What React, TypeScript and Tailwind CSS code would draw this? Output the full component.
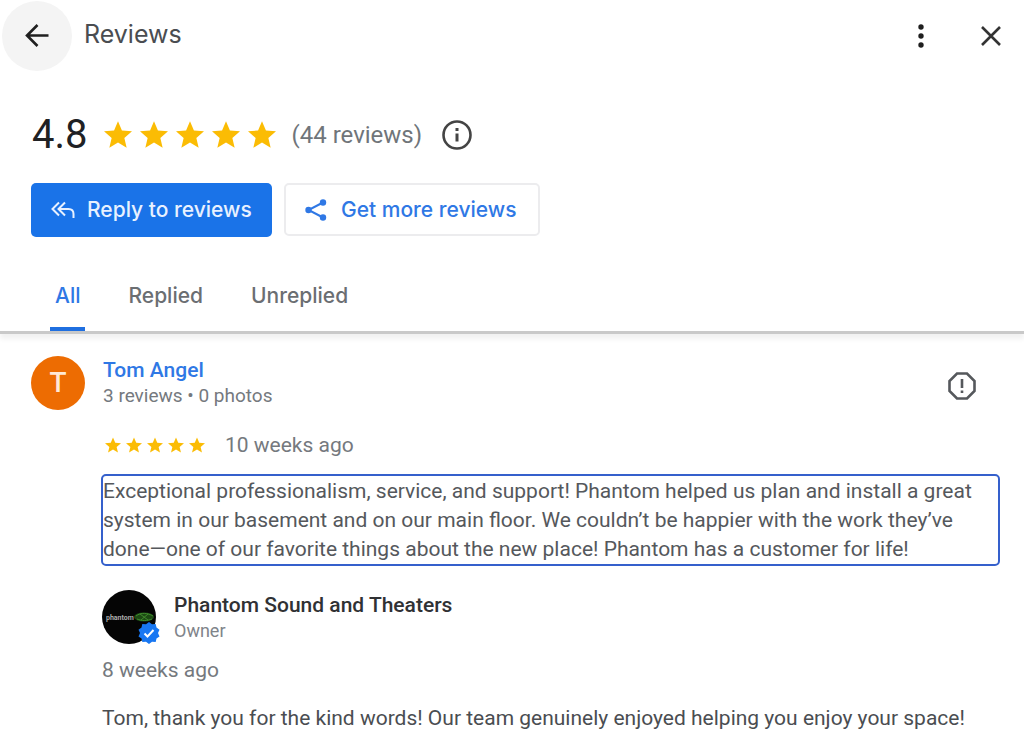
import * as React from "react";

const STAR_PATH =
  "M12 17.27 18.18 21l-1.64-7.03L22 9.24l-7.19-.61L12 2 9.19 8.63 2 9.24l5.46 4.73L5.82 21z";

const tabs = ["All", "Replied", "Unreplied"];

function Stars({ big }: { big?: boolean }) {
  return (
    <div
      role="img"
      aria-label="5 stars"
      className={big ? "flex gap-2" : "flex gap-[5px]"}
    >
      {[1, 2, 3, 4, 5].map((n) => (
        <svg
          key={n}
          viewBox="2 2 20 19"
          fill="#fbbc04"
          className={big ? "h-[27px] w-7" : "h-4 w-4"}
        >
          <path d={STAR_PATH} />
        </svg>
      ))}
    </div>
  );
}

function Header() {
  return (
    <header className="flex items-center pt-px pl-0.5 pr-2">
      <button
        aria-label="Back"
        className="flex h-[70px] w-[70px] shrink-0 items-center justify-center rounded-full bg-[#f4f4f4]"
      >
        <svg
          viewBox="0 0 24 24"
          fill="none"
          stroke="#1f1f1f"
          strokeWidth="2.6"
          className="h-6 w-6"
        >
          <path d="M23.5 11.5H2M12.500 1 2 11.500 12.500 22" />
        </svg>
      </button>
      <h1 className="ml-3 grow pb-0.5 font-[Inter,sans-serif] text-[25px] text-[#4a4d51]">
        Reviews
      </h1>
      <button
        aria-label="More options"
        className="mr-2.5 flex h-[70px] w-[70px] items-center justify-center"
      >
        <svg viewBox="0 0 24 24" fill="#1f1f1f" className="h-6 w-6">
          <circle cx="12" cy="3" r="2.700" />
          <circle cx="12" cy="12" r="2.700" />
          <circle cx="12" cy="21" r="2.700" />
        </svg>
      </button>
      <button
        aria-label="Close"
        className="flex h-[70px] w-[50px] items-center justify-center"
      >
        <svg
          viewBox="0 0 20 20"
          fill="none"
          stroke="#333"
          strokeWidth="2.600"
          className="h-5 w-5"
        >
          <path d="m1 1 18 18M19 1 1 19" />
        </svg>
      </button>
    </header>
  );
}

function Summary() {
  return (
    <section className="px-8 pt-9">
      <div className="flex h-14 items-center">
        <span className="text-[40px] text-[#202124]">4.8</span>
        <div className="ml-4 pb-0.5">
          <Stars big />
        </div>
        <span className="ml-4 text-2xl text-[#70757a]">(44 reviews)</span>
        <button aria-label="About reviews" className="ml-5">
          <svg
            viewBox="0 0 30 30"
            fill="none"
            stroke="#444"
            strokeWidth="2.600"
            className="h-[30px] w-[30px]"
          >
            <circle cx="15" cy="15" r="13.500" />
            <path d="M15 13.500v8M15 8v3" strokeWidth="3" />
          </svg>
        </button>
      </div>
      <div className="-ml-px mt-5 flex gap-3 font-[Inter,sans-serif] text-[21px] font-medium">
        <button className="flex h-[54px] w-[241px] items-center gap-3 rounded-[5px] bg-[#1a73e8] pl-5 whitespace-nowrap text-[#e8f1ff]">
          <svg
            viewBox="0 0 24 20"
            fill="none"
            stroke="currentColor"
            strokeWidth="2"
            className="h-5 w-6"
          >
            <path d="M8 2.500 1.500 9 8 15.500M14 2.500 7.500 9l6.500 6.500M8 9h9.500c3 0 5 2 5 5v4" />
          </svg>
          Reply to reviews
        </button>
        <button className="flex h-[53px] w-[256px] items-center gap-3.5 rounded-[5px] border-2 border-[#ececee] pl-[19px] whitespace-nowrap text-[#2f78e5]">
          <svg viewBox="0 0 22 24" fill="currentColor" className="h-6 w-[22px]">
            <path
              d="M18 4.500 3.500 12 18 19.500"
              fill="none"
              stroke="currentColor"
              strokeWidth="2"
            />
            <circle cx="18" cy="4.500" r="3.200" />
            <circle cx="3.500" cy="12" r="3.200" />
            <circle cx="18" cy="19.500" r="3.200" />
          </svg>
          Get more reviews
        </button>
      </div>
    </section>
  );
}

function Tabs() {
  const [active, setActive] = React.useState("All");

  return (
    <div
      role="tablist"
      className="mt-6 flex gap-[38px] border-b-3 border-[#c9c9c9] pl-[50px] font-[Inter,sans-serif] text-[21px] font-medium shadow-[0_5px_5px_rgba(0,0,0,0.06)]"
    >
      {tabs.map((tab) => (
        <button
          key={tab}
          role="tab"
          aria-selected={active === tab}
          onClick={() => setActive(tab)}
          className={
            active === tab
              ? "h-[70px] border-b-4 border-[#1f6fe0] px-[5px] pt-1 text-[#2f78e5]"
              : "h-[70px] border-b-4 border-transparent px-[5px] pt-1 text-[#6b6e72]"
          }
        >
          {tab}
        </button>
      ))}
    </div>
  );
}

function OwnerReply() {
  return (
    <div className="-ml-px mt-6">
      <div className="flex items-center">
        <div className="relative">
          {/* business logo */}
          <svg viewBox="0 0 54 54" className="h-[54px] w-[54px]">
            <circle cx="27" cy="27" r="27" fill="#050505" />
            <ellipse cx="42" cy="27" rx="10" ry="4.500" fill="#1d4a14" />
            <path
              d="M34 26c5-4 12-3 17 0M35 29c5 2 10 2 15 0M38 24l8 6M46 24l-7 6"
              stroke="#3f8a2c"
              fill="none"
            />
            <text
              x="4"
              y="30"
              fontSize="7"
              fontWeight="700"
              fontFamily="Roboto, sans-serif"
              fill="#aaa"
            >
              phantom
            </text>
          </svg>
          <svg
            viewBox="0 0 22 22"
            className="absolute -right-1 bottom-0 h-[22px] w-[22px]"
          >
            <path
              d="m11 0 3 2.300 3.700-.3.800 3.600 3 2.200L20 11l1.500 3.400-3 2.100-.8 3.500-3.700-.2L11 22l-3-2.200-3.700.2-.8-3.500-3-2.100L2 11 .500 7.800l3-2.200L4.300 2 8 2.300z"
              fill="#1877f2"
            />
            <path
              d="m6.500 11.500 3 3 6-6.500"
              fill="none"
              stroke="#fff"
              strokeWidth="2"
            />
          </svg>
        </div>
        <div className="ml-[18px]">
          <h3 className="text-[21px] leading-7 font-medium text-[#303134]">
            Phantom Sound and Theaters
          </h3>
          <p className="text-lg leading-6 text-[#80848a]">Owner</p>
        </div>
      </div>
      <p className="mt-3 text-[21px] leading-7 text-[#75797e]">8 weeks ago</p>
      <p className="mt-5 text-[21px] leading-7 text-[#4a4d51]">
        Tom, thank you for the kind words! Our team genuinely enjoyed helping
        you enjoy your space!
      </p>
    </div>
  );
}

function Review() {
  return (
    <article className="flex pt-[22px] pr-6 pl-[31px]">
      <div className="flex h-[54px] w-[54px] shrink-0 items-center justify-center rounded-full bg-[#ed6c02] text-[28px] font-medium text-[#ffe9d6]">
        T
      </div>
      <div className="ml-[18px] min-w-0 grow">
        <div className="flex items-center justify-between">
          <div>
            <a
              href="#tom-angel"
              className="block text-[21px] leading-7 font-medium text-[#2f78e5]"
            >
              Tom Angel
            </a>
            <p className="text-[19px] leading-6 text-[#75797e]">
              3 reviews • 0 photos
            </p>
          </div>
          <button aria-label="Report review" className="mt-2 mr-6">
            <svg
              viewBox="0 0 28 28"
              fill="none"
              stroke="#55585c"
              strokeWidth="2.600"
              className="h-7 w-7"
            >
              <path d="M9 1.500h10L26.500 9v10L19 26.500H9L1.500 19V9z" />
              <path d="M14 7v9M14 18.500v2.500" />
            </svg>
          </button>
        </div>
        <div className="mt-[23px] ml-0.5 flex items-center gap-5">
          <Stars />
          <span className="text-[21px] leading-7 text-[#75797e]">
            10 weeks ago
          </span>
        </div>
        <p className="-ml-0.5 mt-[15px] rounded-[5px] border-2 border-[#3560cc] pt-px text-[21px] leading-[29px] text-[#55585c]">
          Exceptional professionalism, service, and support! Phantom helped us
          plan and install a great system in our basement and on our main floor.
          We couldn’t be happier with the work they’ve done—one of our favorite
          things about the new place! Phantom has a customer for life!
        </p>
        <OwnerReply />
      </div>
    </article>
  );
}

export default function App() {
  return (
    <main className="bg-white font-['Roboto',sans-serif]">
      <Header />
      <Summary />
      <Tabs />
      <Review />
    </main>
  );
}
